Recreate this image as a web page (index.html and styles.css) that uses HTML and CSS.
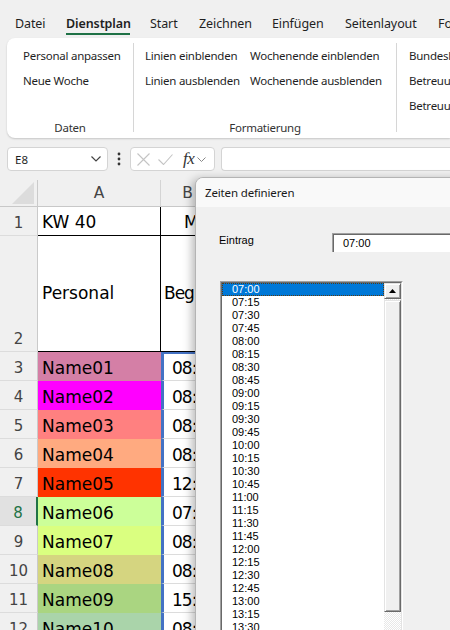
FILE: index.html
```html
<!DOCTYPE html>
<html lang="de">
<head>
<meta charset="utf-8">
<title>Dienstplan</title>
<link rel="stylesheet" href="styles.css">
</head>
<body>
<nav class="tabs">
  <span class="tab w51">Datei</span>
  <span class="tab w84 active">Dienstplan</span>
  <span class="tab w49">Start</span>
  <span class="tab w73">Zeichnen</span>
  <span class="tab w73">Einfügen</span>
  <span class="tab w93">Seitenlayout</span>
  <span class="tab">Formeln</span>
</nav>

<div class="ribbon">
  <div class="group g1">
    <div class="items">
      <div class="col">
        <div class="btn">Personal anpassen</div>
        <div class="btn">Neue Woche</div>
      </div>
    </div>
    <div class="glabel">Daten</div>
  </div>
  <div class="sep"></div>
  <div class="group g2">
    <div class="items">
      <div class="col c1">
        <div class="btn">Linien einblenden</div>
        <div class="btn">Linien ausblenden</div>
      </div>
      <div class="col">
        <div class="btn">Wochenende einblenden</div>
        <div class="btn">Wochenende ausblenden</div>
      </div>
    </div>
    <div class="glabel">Formatierung</div>
  </div>
  <div class="sep"></div>
  <div class="group g3">
    <div class="items">
      <div class="col">
        <div class="btn">Bundesland</div>
        <div class="btn">Betreuung</div>
        <div class="btn">Betreuung</div>
      </div>
    </div>
  </div>
</div>

<div class="fbar">
  <div class="namebox">
    <span class="nb-text">E8</span>
    <svg class="chev" width="10" height="6" viewBox="0 0 10 6"><polyline points="0.5,0.5 5,5 9.5,0.5" fill="none" stroke="#444" stroke-width="1.2"/></svg>
  </div>
  <div class="dots">
    <svg width="4" height="14" viewBox="0 0 4 14"><circle cx="2" cy="2" r="1.4" fill="#333"/><circle cx="2" cy="7" r="1.4" fill="#333"/><circle cx="2" cy="12" r="1.4" fill="#333"/></svg>
  </div>
  <div class="fxbox">
    <svg class="ico" width="13" height="13" viewBox="0 0 13 13"><path d="M0.5 0.5 L12.5 12.5 M12.5 0.5 L0.5 12.5" stroke="#c4c4c4" stroke-width="1.1" fill="none"/></svg>
    <svg class="ico ck" width="15" height="11" viewBox="0 0 15 11"><polyline points="0.5,5.5 5.5,10.5 14.5,0.5" stroke="#c4c4c4" stroke-width="1.1" fill="none"/></svg>
    <span class="fx">fx</span>
    <svg class="chev2" width="9" height="5" viewBox="0 0 9 5"><polyline points="0.5,0.5 4.5,4.5 8.5,0.5" fill="none" stroke="#888" stroke-width="1"/></svg>
  </div>
  <div class="formula"></div>
</div>

<div class="sheet">
  <div class="row hdr">
    <div class="rh corner"><svg width="22" height="22" viewBox="0 0 22 22"><polygon points="22,0 22,22 0,22" fill="#dcdcdc"/></svg></div>
    <div class="ca ch">A</div>
    <div class="cb ch chb">B</div>
  </div>
  <div class="row r1">
    <div class="rh">1</div>
    <div class="ca bl">KW 40</div>
    <div class="cb bl mo">Montag</div>
  </div>
  <div class="row r2">
    <div class="rh">2</div>
    <div class="ca bl mid">Personal</div>
    <div class="cb bl mid beg">Beginn</div>
  </div>
  <div class="row"><div class="rh">3</div><div class="ca n01">Name01</div><div class="cb sel first">08:00</div></div>
  <div class="row"><div class="rh">4</div><div class="ca n02">Name02</div><div class="cb sel">08:00</div></div>
  <div class="row"><div class="rh">5</div><div class="ca n03">Name03</div><div class="cb sel">08:00</div></div>
  <div class="row"><div class="rh">6</div><div class="ca n04">Name04</div><div class="cb sel">08:00</div></div>
  <div class="row"><div class="rh">7</div><div class="ca n05">Name05</div><div class="cb sel">12:00</div></div>
  <div class="row"><div class="rh act">8</div><div class="ca n06">Name06</div><div class="cb sel">07:00</div></div>
  <div class="row"><div class="rh">9</div><div class="ca n07">Name07</div><div class="cb sel">08:00</div></div>
  <div class="row"><div class="rh">10</div><div class="ca n08">Name08</div><div class="cb sel">08:00</div></div>
  <div class="row"><div class="rh">11</div><div class="ca n09">Name09</div><div class="cb sel">15:00</div></div>
  <div class="row"><div class="rh">12</div><div class="ca n10">Name10</div><div class="cb sel">08:00</div></div>
</div>

<div class="dialog">
  <div class="dtitle">Zeiten definieren</div>
  <div class="dbody">
    <div class="entry">
      <span class="elabel">Eintrag</span>
      <div class="etext">07:00</div>
    </div>
    <div class="lb">
      <div class="lb-in">
        <div class="items-list">
          <div class="it selected">07:00</div>
          <div class="it">07:15</div>
          <div class="it">07:30</div>
          <div class="it">07:45</div>
          <div class="it">08:00</div>
          <div class="it">08:15</div>
          <div class="it">08:30</div>
          <div class="it">08:45</div>
          <div class="it">09:00</div>
          <div class="it">09:15</div>
          <div class="it">09:30</div>
          <div class="it">09:45</div>
          <div class="it">10:00</div>
          <div class="it">10:15</div>
          <div class="it">10:30</div>
          <div class="it">10:45</div>
          <div class="it">11:00</div>
          <div class="it">11:15</div>
          <div class="it">11:30</div>
          <div class="it">11:45</div>
          <div class="it">12:00</div>
          <div class="it">12:15</div>
          <div class="it">12:30</div>
          <div class="it">12:45</div>
          <div class="it">13:00</div>
          <div class="it">13:15</div>
          <div class="it">13:30</div>
          <div class="it">13:45</div>
        </div>
        <div class="sbar">
          <div class="sbtn"><svg width="7" height="4" viewBox="0 0 7 4"><polygon points="3.5,0 7,4 0,4" fill="#000"/></svg></div>
          <div class="sgap"></div>
          <div class="thumb"></div>
          <div class="track"></div>
        </div>
      </div>
    </div>
  </div>
</div>
</body>
</html>
```

FILE: styles.css
```css
html, body {
  margin: 0;
  padding: 0;
}
body {
  width: 450px;
  height: 630px;
  overflow: hidden;
  position: relative;
  background: #f0f0f0;
  font-family: "Noto Sans", "Open Sans", sans-serif;
  color: #1f1f1f;
}

/* tabs */
.tabs {
  display: flex;
  height: 38px;
  box-sizing: border-box;
  padding: 14px 0 0 15px;
  white-space: nowrap;
  font-size: 12.5px;
  letter-spacing: -0.1px;
}
.tab {
  flex: none;
  line-height: 19px;
  height: 19px;
}
.w51 { width: 51px; }
.w84 { width: 84px; }
.w49 { width: 49px; }
.w73 { width: 73px; }
.w93 { width: 93px; }
.tab.active {
  font-weight: 600;
  position: relative;
}
.tab.active::after {
  content: "";
  position: absolute;
  left: 0;
  top: 19px;
  width: 64px;
  height: 2px;
  background: #1e7145;
}

/* ribbon */
.ribbon {
  margin-left: 7px;
  height: 100px;
  background: #fff;
  border-radius: 8px 0 0 8px;
  box-shadow: 0 1px 2px rgba(0, 0, 0, 0.18);
  display: flex;
  white-space: nowrap;
  font-size: 11.5px;
  letter-spacing: -0.25px;
  overflow: hidden;
}
.group {
  display: flex;
  flex-direction: column;
  box-sizing: border-box;
  padding-top: 5px;
  flex: none;
}
.g1 { width: 126px; padding-left: 16px; }
.g2 { width: 262px; padding-left: 11px; }
.g3 { width: 60px; padding-left: 12px; }
.items { display: flex; }
.col { display: flex; flex-direction: column; }
.c1 { width: 105px; }
.btn {
  height: 25px;
  line-height: 25px;
}
.glabel {
  margin-top: auto;
  line-height: 20px;
  text-align: center;
  color: #333;
}
.g1 .glabel { margin-left: -16px; }
.g2 .glabel { margin-left: -11px; }
.sep {
  flex: none;
  width: 1px;
  background: #d6d6d6;
  margin: 5px 0 6px;
}

/* formula bar */
.fbar {
  margin-top: 9px;
  height: 24px;
  display: flex;
  padding-left: 7px;
}
.namebox, .fxbox, .formula {
  background: #fff;
  border: 1px solid #d4d4d4;
  border-radius: 4px;
  box-sizing: border-box;
  height: 24px;
  display: flex;
  align-items: center;
}
.namebox {
  width: 101px;
  padding-left: 7px;
  font-size: 11.5px;
}
.nb-text { flex: 1; }
.chev { margin-right: 6px; }
.dots {
  width: 22px;
  display: flex;
  align-items: center;
  justify-content: center;
}
.fxbox {
  width: 85px;
  padding-left: 6px;
}
.ico { flex: none; }
.ck { margin-left: 8px; }
.fx {
  font-family: "Liberation Serif", "DejaVu Serif", serif;
  font-style: italic;
  font-size: 17px;
  color: #333;
  margin-left: 10px;
  line-height: 20px;
  letter-spacing: -0.5px;
}
.chev2 { margin-left: 3px; }
.formula {
  margin-left: 6px;
  flex: 1;
  border-right: none;
  border-radius: 4px 0 0 4px;
}

/* sheet */
.sheet {
  margin-top: 9px;
  font-family: "DejaVu Sans", sans-serif;
}
.row {
  display: flex;
  height: 29px;
}
.row.hdr { height: 27px; }
.row.r2 { height: 116px; }
.rh {
  flex: none;
  width: 38px;
  box-sizing: border-box;
  border-right: 1px solid #cacaca;
  border-bottom: 1px solid #dcdcdc;
  background: #f0f0f0;
  color: #444;
  font-size: 15px;
  display: flex;
  align-items: flex-end;
  justify-content: center;
  padding-bottom: 3px;
}
.rh.act {
  background: #e1e1e1;
  color: #217346;
  border-right: 2px solid #217346;
}
.corner {
  align-items: flex-end;
  justify-content: flex-end;
  padding: 0 3px 2px 0;
  border-bottom: 1px solid #c8c8c8;
}
.ca {
  flex: none;
  width: 123px;
  box-sizing: border-box;
  font-size: 17px;
  color: #000;
  padding: 2px 0 0 4px;
  line-height: 29px;
  white-space: nowrap;
  overflow: hidden;
}
.cb {
  flex: 1;
  box-sizing: border-box;
  font-size: 17px;
  letter-spacing: -1px;
  color: #000;
  background: #fff;
  white-space: nowrap;
  overflow: hidden;
  padding-top: 2px;
  line-height: 29px;
  border-bottom: 1px solid #dcdcdc;
}
.ch {
  background: #f0f0f0;
  color: #444;
  font-size: 15.5px;
  letter-spacing: 0;
  text-align: center;
  line-height: 27px;
  padding: 0;
  border-right: 1px solid #d4d4d4;
  border-bottom: 1px solid #c8c8c8;
}
.chb {
  flex: none;
  width: 54px;
}
.bl {
  background: #fff;
  border-right: 1px solid #000;
  border-bottom: 1px solid #000;
}
.r1 .ca, .r1 .cb { line-height: 28px; padding-top: 1px; }
.mo { padding-left: 23px; }
.mid {
  display: flex;
  align-items: center;
  padding-top: 0;
}
.beg { padding-left: 3px; }
.sel {
  border-left: 3px solid #4472c4;
  padding-left: 8px;
}
.sel.first { border-top: 2px solid #4472c4; padding-top: 0; }
.n01 { background: #d47fa6; }
.n02 { background: #ff00ff; }
.n03 { background: #ff8080; }
.n04 { background: #ffaa80; }
.n05 { background: #ff3300; }
.n06 { background: #ccff99; }
.n07 { background: #daff80; }
.n08 { background: #d5d580; }
.n09 { background: #aad581; }
.n10 { background: #aad4aa; }

/* dialog */
.dialog {
  position: absolute;
  left: 195px;
  top: 177px;
  width: 280px;
  height: 480px;
  border: 1px solid #b4b4b4;
  border-radius: 8px 0 0 0;
  background: #f0f0f0;
  box-shadow: -3px 2px 10px rgba(0, 0, 0, 0.28);
  overflow: hidden;
}
.dtitle {
  height: 29px;
  line-height: 30px;
  background: #f9f9f9;
  padding-left: 9px;
  font-size: 11.5px;
  letter-spacing: -0.15px;
  color: #1a1a1a;
}
.dbody {
  font-family: "Liberation Sans", Arial, sans-serif;
  font-size: 11px;
  color: #000;
}
.entry {
  display: flex;
  align-items: flex-start;
  padding: 26px 0 0 23px;
}
.elabel {
  width: 113px;
  flex: none;
  line-height: 14px;
}
.etext {
  flex: 1;
  height: 19px;
  box-sizing: border-box;
  background: #fff;
  border-top: 1px solid #a0a0a0;
  border-left: 1px solid #a0a0a0;
  box-shadow: inset 1px 1px 0 #696969;
  padding-left: 10px;
  line-height: 18px;
}
.lb {
  margin: 29px 0 0 24px;
  width: 183px;
  height: 400px;
  box-sizing: border-box;
  border: 1px solid;
  border-color: #a0a0a0 #ffffff #ffffff #a0a0a0;
}
.lb-in {
  height: 100%;
  box-sizing: border-box;
  border: 1px solid;
  border-color: #696969 #e3e3e3 #e3e3e3 #696969;
  background: #fff;
  display: flex;
}
.items-list {
  width: 162px;
  flex: none;
}
.it {
  height: 13px;
  line-height: 13px;
  padding-left: 10px;
  box-sizing: border-box;
}
.it.selected {
  background: #0078d7;
  color: #fff;
  outline: 1px dotted #5a3a10;
  outline-offset: -1px;
}
.sbar {
  width: 17px;
  flex: none;
  display: flex;
  flex-direction: column;
  background: repeating-conic-gradient(#ffffff 0 25%, #e8e8e8 0 50%) 0 0 / 2px 2px;
}
.sbtn, .thumb {
  background: #f0f0f0;
  box-sizing: border-box;
  border: 1px solid;
  border-color: #e3e3e3 #696969 #696969 #e3e3e3;
  box-shadow: inset 1px 1px 0 #fff, inset -1px -1px 0 #a0a0a0;
}
.sbtn {
  height: 16px;
  display: flex;
  align-items: center;
  justify-content: center;
}
.sgap { height: 1px; }
.thumb { height: 312px; }
.track { flex: 1; }
```
